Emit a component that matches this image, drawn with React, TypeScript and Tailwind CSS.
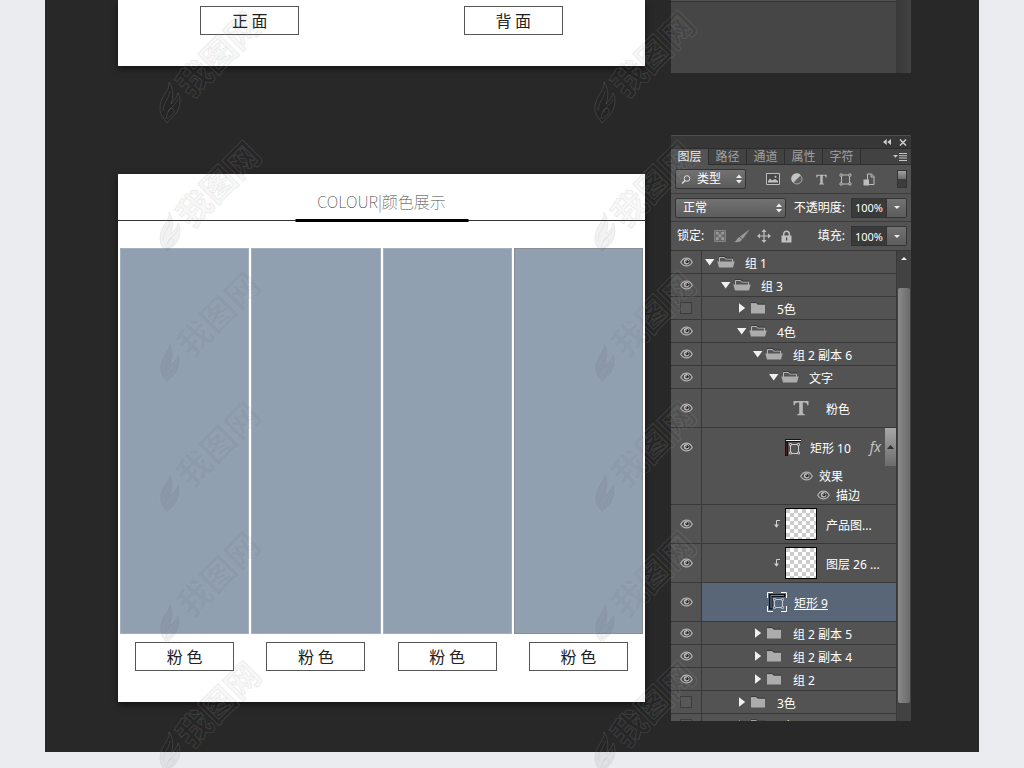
import { useState } from "react";
import type { ReactNode } from "react";

type Kind = "open" | "closed" | "text" | "shape" | "image" | "selected";

type Layer = {
  name: string;
  level: number;
  kind: Kind;
  hidden?: boolean;
};

const layers: Layer[] = [
  { name: "组 1", level: 0, kind: "open" },
  { name: "组 3", level: 1, kind: "open" },
  { name: "5色", level: 2, kind: "closed", hidden: true },
  { name: "4色", level: 2, kind: "open" },
  { name: "组 2 副本 6", level: 3, kind: "open" },
  { name: "文字", level: 4, kind: "open" },
  { name: "粉色", level: 4, kind: "text" },
  { name: "矩形 10", level: 4, kind: "shape" },
  { name: "产品图...", level: 4, kind: "image" },
  { name: "图层 26 ...", level: 4, kind: "image" },
  { name: "矩形 9", level: 4, kind: "selected" },
  { name: "组 2 副本 5", level: 3, kind: "closed" },
  { name: "组 2 副本 4", level: 3, kind: "closed" },
  { name: "组 2", level: 3, kind: "closed" },
  { name: "3色", level: 2, kind: "closed", hidden: true },
];

const tabs = ["图层", "路径", "通道", "属性", "字符"];

/* ---------- icons ---------- */

const Eye = () => (
  <svg width="13" height="10" viewBox="0 0 13 10" fill="none">
    <path d="M0.8 5.2C2.2 2.4 4.400 1.200 6.500 1.200s4.300 1.200 5.700 4C10.800 7.700 8.600 8.800 6.500 8.800S2.200 7.700 0.800 5.200z" fill="#4a4a4a" stroke="#b0b0b0" strokeWidth="1.300" />
    <circle cx="6.500" cy="4.800" r="2.700" fill="#bdbdbd" />
    <circle cx="7" cy="4.600" r="1.700" fill="#262626" />
    <circle cx="6.200" cy="3.900" r="0.700" fill="#ddd" />
  </svg>
);

const FolderOpen = () => (
  <svg width="18" height="12" viewBox="0 0 18 12">
    <path d="M2.5 6V1.5h5l1 1.5h7V6" fill="#555" stroke="#b5b5b5" />
    <path d="M2 0.5h6L9 2h7" fill="none" stroke="#333" strokeWidth="0.8" />
    <path d="M0.3 5.5h17.4L16 11.5H2z" fill="#acacac" />
  </svg>
);

const FolderClosed = () => (
  <svg width="18" height="12" viewBox="0 0 18 12">
    <path d="M2 1h5.2l1.3 1.6H16v9H2z" fill="#acacac" />
    <path d="M2 0.6h5.4l1.4 1.5H16" fill="none" stroke="#333" strokeWidth="0.8" />
  </svg>
);

const Triangle = ({ open }: { open: boolean }) => (
  <svg width="12" height="10" viewBox="0 0 12 10" fill="#f0f0f0">
    {open ? <path d="M1 2h9.4L5.7 8.4z" /> : <path d="M3 0.2L9.2 5 3 9.8z" />}
  </svg>
);

const UpDown = () => (
  <svg className="pointer-events-none absolute right-1 top-1/2 -translate-y-1/2" width="6" height="10" viewBox="0 0 6 10" fill="#eee">
    <path d="M3 0.5L6 4H0zM3 9.5L6 6H0z" />
  </svg>
);

const Frame = ({ color = "#bdbdbd" }: { color?: string }) => (
  <svg width="13" height="13" viewBox="0 0 13 13" fill="none" stroke={color}>
    <path d="M3.5 2h6M3.5 11h6M2.5 3.5v6M10.5 3.5v6" />
    <path d="M1 1h2.2v2.2H1zM9.8 1H12v2.2H9.8zM1 9.8h2.2V12H1zM9.8 9.8H12V12H9.8z" strokeWidth="0.9" />
  </svg>
);

const TypeIcon = ({ size }: { size: number }) => (
  <svg width={size} height={size} viewBox="0 0 16 16" fill="#b8b8b8">
    <path d="M0.5 1h15v4.2h-1.2C14 3.2 13.3 2.6 11.5 2.5H9.8v10.3c0 1 .5 1.3 2 1.4v1H4.2v-1c1.500 -.1 2 -.4 2 -1.400V2.500H4.500C2.700 2.600 2 3.200 1.700 5.200H0.500z" />
  </svg>
);

const ShapeThumb = () => (
  <svg width="17" height="17" viewBox="0 0 17 17" fill="none">
    <path d="M0 0h16v3H3v14H0z" fill="#191212" />
    <path d="M1 1.500h15" stroke="#eee" />
    <path d="M1.500 4v12" stroke="#4b1c1c" />
    <path d="M6.500 5.500h6M6.500 14.500h6M5.500 6.500v7M13.500 6.500v7" stroke="#ccc" />
    <path d="M4.500 4.500h2v2h-2zM12.500 4.500h2v2h-2zM4.500 13h2v2h-2zM12.500 13h2v2h-2z" stroke="#bbb" />
  </svg>
);

const SelectedThumb = () => (
  <svg width="20" height="20" viewBox="0 0 20 20" fill="none">
    <path d="M0.500 6V0.500H6M14 0.500h5.500V6M19.500 14v5.500H14M6 19.500H0.500V14" stroke="#fff" />
    <path d="M2.500 17V2.500H18v2H5V17z" fill="#111a2c" stroke="#0b0f18" />
    <path d="M4 16V3.500h13" stroke="#c8ced8" strokeWidth="0.600" />
    <path d="M8.500 7.500h6M8.500 15.500h6M7.500 8.500v6M15.500 8.500v6" stroke="#c3cad6" />
    <path d="M6.500 6.500h2v2h-2zM14.500 6.500h2v2h-2zM6.500 14.500h2v2h-2zM14.500 14.500h2v2h-2z" stroke="#aab3c2" />
  </svg>
);

const Checker = () => (
  <svg className="border border-black" width="32" height="32" viewBox="0 0 30 30">
    <defs>
      <pattern id="checker" width="8" height="8" patternUnits="userSpaceOnUse">
        <rect width="8" height="8" fill="#fff" />
        <path d="M0 0h4v4H0zM4 4h4v4H4z" fill="#ccc" />
      </pattern>
    </defs>
    <rect width="30" height="30" fill="url(#checker)" />
  </svg>
);

const ClipArrow = () => (
  <svg width="8" height="10" viewBox="0 0 8 10" fill="none" stroke="#d0d0d0">
    <path d="M7 1.500H3.500V8" />
    <path d="M1 5.500h5L3.500 8.800z" fill="#d0d0d0" stroke="none" />
  </svg>
);

const FilterIcons = () => (
  <>
    <button aria-label="像素图层" className="flex w-6 justify-center">
      <svg width="14" height="12" viewBox="0 0 14 12" fill="none">
        <path d="M0.500 0.500h13v11H0.500z" fill="#484848" stroke="#bdbdbd" />
        <path d="M2 9.500V8l2-2.500L6 7.500l3-1.500 3 2v1.500z" fill="#c2c2c2" />
        <circle cx="9.500" cy="3.800" r="1" fill="#c2c2c2" />
      </svg>
    </button>
    <button aria-label="调整图层" className="flex w-6 justify-center">
      <svg width="12" height="12" viewBox="0 0 12 12">
        <circle cx="6" cy="6" r="5" fill="#5f5f5f" stroke="#a8a8a8" />
        <path d="M9.800 2.200A5.400 5.400 0 1 0 2.200 9.800z" fill="#c4c4c4" />
      </svg>
    </button>
    <button aria-label="文字图层" className="flex w-6 justify-center">
      <TypeIcon size={11} />
    </button>
    <button aria-label="形状图层" className="flex w-6 justify-center">
      <Frame />
    </button>
    <button aria-label="智能对象" className="flex w-6 justify-center">
      <svg width="12" height="13" viewBox="0 0 12 13" fill="none">
        <path d="M4.500 7V1h4l2.500 2.500V11.500H6" stroke="#bdbdbd" />
        <path d="M8 1v3h3" stroke="#bdbdbd" />
        <path d="M0.500 6.500h5.500v6H0.500z" fill="#bdbdbd" />
      </svg>
    </button>
  </>
);

const LockIcons = () => (
  <>
    <button aria-label="锁定透明像素" className="flex w-[22px] justify-center">
      <svg width="12" height="12" viewBox="0 0 12 12">
        <path d="M0.500 0.500h11v11H0.500z" fill="#6a6a6a" stroke="#858585" />
        <path d="M2 2h2.600v2.600H2zM7.300 2H10v2.600H7.300zM4.600 4.600h2.700v2.700H4.600zM2 7.300h2.600V10H2zM7.300 7.300H10V10H7.300z" fill="#9a9a9a" />
      </svg>
    </button>
    <button aria-label="锁定图像像素" className="flex w-[22px] justify-center">
      <svg width="16" height="14" viewBox="0 0 16 14" fill="#989898">
        <path d="M15.800 0.300L8.800 10 5.800 7.500z" />
        <path d="M5.400 8l2.600 2.100C7.400 13 3 14 0.300 12.800c2.400-.5 2.300-3.800 5.100-4.800z" />
      </svg>
    </button>
    <button aria-label="锁定位置" className="flex w-[22px] justify-center">
      <svg width="14" height="14" viewBox="0 0 14 14" fill="#c0c0c0">
        <path d="M7 0l2.500 3H4.500zM7 14l2.500-3H4.500zM0 7l3-2.500v5zM14 7l-3-2.500v5z" />
        <path d="M6.400 2h1.200v10H6.400zM2 6.400h10v1.200H2z" />
      </svg>
    </button>
    <button aria-label="锁定全部" className="flex w-[22px] justify-center">
      <svg width="11" height="13" viewBox="0 0 11 13" fill="none">
        <path d="M2.700 6V4a2.800 2.800 0 0 1 5.600 0v2" stroke="#c0c0c0" strokeWidth="1.500" />
        <path d="M0.500 5.500h10V12.500H0.500z" fill="#c0c0c0" />
        <path d="M5 7.500h1.200v3H5z" fill="#444" />
      </svg>
    </button>
  </>
);

/* ---------- left column ---------- */

const Tag = ({ children }: { children: ReactNode }) => (
  <div className="mx-auto flex h-[29px] w-[99px] items-center justify-center border border-[#555] pb-0.5 text-base leading-4 text-[#222]">
    {children}
  </div>
);

const SideBoard = () => (
  <section className="grid grid-cols-2 bg-white pb-[31px] pt-1.5 shadow-[0_3px_6px_rgba(0,0,0,0.5)]">
    <Tag>正 面</Tag>
    <Tag>背 面</Tag>
  </section>
);

const ColourBoard = () => (
  <section className="bg-white pb-[31px] shadow-[0_3px_6px_rgba(0,0,0,0.5)]">
    <header className="relative flex h-[47px] items-center justify-center border-b border-[#333] pt-2">
      <h2 className="text-base font-thin text-[#444]">COLOUR|颜色展示</h2>
      <div className="absolute -bottom-0.5 left-1/2 h-[3px] w-[173px] -translate-x-1/2 bg-black" />
    </header>
    <div className="grid grid-cols-4 gap-x-0.5 px-0.5 pt-[27px]">
      {[0, 1, 2, 3].map((i) => (
        <div key={i}>
          <div className={`mb-2 h-[386px] border bg-[#91a0b1] ${i === 3 ? "border-[#8a8f95]" : "border-[#a3b0be]"}`} />
          <Tag>粉 色</Tag>
        </div>
      ))}
    </div>
  </section>
);

/* ---------- layers panel ---------- */

const VisibilityToggle = ({ hidden }: { hidden?: boolean }) => {
  const [visible, setVisible] = useState(!hidden);
  return (
    <button aria-label="可见性" aria-pressed={visible} onClick={() => setVisible(!visible)} className="flex">
      {visible ? <Eye /> : <span className="h-3 w-3 border border-[#3c3c3c] bg-[#585858]" />}
    </button>
  );
};

const Row = ({ height, hidden, active, children }: { height: string; hidden?: boolean; active?: boolean; children: ReactNode }) => (
  <li className={`flex border-b border-[#383838] ${height}`}>
    <div className="flex w-[31px] shrink-0 items-center justify-center border-r border-[#383838]">
      <VisibilityToggle hidden={hidden} />
    </div>
    <div className={`flex grow items-center whitespace-nowrap ${active ? "bg-[#596678]" : ""}`}>{children}</div>
  </li>
);

const GroupRow = ({ layer }: { layer: Layer }) => (
  <Row height="h-[23px]" hidden={layer.hidden}>
    <div className="flex items-center" style={{ paddingLeft: 2 + layer.level * 16 }}>
      <Triangle open={layer.kind === "open"} />
      <span className="ml-px mr-2.5">{layer.kind === "open" ? <FolderOpen /> : <FolderClosed />}</span>
      <span className="pt-1">{layer.name}</span>
    </div>
  </Row>
);

const LayerRow = ({ layer }: { layer: Layer }) => {
  switch (layer.kind) {
    case "text":
      return (
        <Row height="h-[39px]">
          <div className="flex items-center pl-[91px]">
            <TypeIcon size={16} />
            <span className="ml-[17px] pt-1">{layer.name}</span>
          </div>
        </Row>
      );
    case "shape":
      return (
        <li className="flex h-[77px] border-b border-[#383838]">
          <div className="flex w-[31px] shrink-0 justify-center border-r border-[#383838] pt-3.5">
            <div>
              <VisibilityToggle />
            </div>
          </div>
          <div className="grow">
            <div className="flex h-[38px] items-center pl-[83px]">
              <ShapeThumb />
              <span className="ml-2 whitespace-nowrap pt-1">{layer.name}</span>
              <i className="ml-auto mr-1 font-['Noto_Sans',sans-serif] text-sm text-[#c4c4c4]">fx</i>
              <button aria-label="折叠效果" className="flex h-full w-[11px] items-center justify-center bg-linear-to-b from-[#a8a8a8] to-[#6c6c6c]">
                <svg width="7" height="4" viewBox="0 0 7 4" fill="#333">
                  <path d="M3.500 0L7 4H0z" />
                </svg>
              </button>
            </div>
            <div className="flex h-[19px] items-center gap-1.5 pl-[98px]">
              <VisibilityToggle />
              <span className="pt-0.5">效果</span>
            </div>
            <div className="flex h-[19px] items-center gap-1.5 pl-[115px]">
              <VisibilityToggle />
              <span className="pt-0.5">描边</span>
            </div>
          </div>
        </li>
      );
    case "image":
      return (
        <Row height="h-[39px]">
          <div className="flex items-center gap-1 pl-[71px]">
            <ClipArrow />
            <Checker />
            <span className="pl-[5px] pt-1">{layer.name}</span>
          </div>
        </Row>
      );
    case "selected":
      return (
        <Row height="h-[39px]" active>
          <div className="flex items-center gap-[7px] pl-[65px]">
            <SelectedThumb />
            <span className="pt-1 underline">{layer.name}</span>
          </div>
        </Row>
      );
    default:
      return <GroupRow layer={layer} />;
  }
};

const Dropdown = ({ label, options, className }: { label: string; options: string[]; className: string }) => (
  <div className="relative">
    <select
      aria-label={label}
      className={`h-5 appearance-none rounded-xs border border-[#333] bg-linear-to-b from-[#727272] to-[#5c5c5c] leading-4 text-white ${className}`}
    >
      {options.map((o) => (
        <option key={o}>{o}</option>
      ))}
    </select>
    <UpDown />
  </div>
);

const Percent = ({ id, label }: { id: string; label: string }) => (
  <div className="ml-auto flex items-center">
    <label htmlFor={id} className="mr-1.5">
      {label}
    </label>
    <input id={id} defaultValue="100%" className="h-5 w-9 border border-[#333] bg-[#3a3a3a] text-center text-[11px] text-white" />
    <button aria-label={`${label}滑块`} className="flex h-5 w-5 items-center justify-center rounded-r-xs border border-l-0 border-[#333] bg-linear-to-b from-[#727272] to-[#5c5c5c]">
      <svg width="6" height="3" viewBox="0 0 6 3" fill="#eee">
        <path d="M0 0h6L3 3z" />
      </svg>
    </button>
  </div>
);

const LayersPanel = () => {
  const [tab, setTab] = useState("图层");
  return (
    <section className="rounded-t-xs bg-[#535353] text-xs leading-4 text-white">
      <div className="flex h-[13px] items-center justify-end gap-2 rounded-t-xs border-t border-[#505050] bg-[#373737] pr-1">
        <button aria-label="折叠">
          <svg width="8" height="6" viewBox="0 0 8 6" fill="#ccc">
            <path d="M3.700 0v6L0 3zM8 0v6L4.300 3z" />
          </svg>
        </button>
        <button aria-label="关闭">
          <svg width="8" height="7" viewBox="0 0 8 7" stroke="#ccc" strokeWidth="1.500">
            <path d="M1 0.500l6 6M7 0.500l-6 6" />
          </svg>
        </button>
      </div>
      <div className="flex h-[17px] items-stretch border-t border-[#2c2c2c] bg-[#424242]">
        {tabs.map((t) => (
          <button
            key={t}
            onClick={() => setTab(t)}
            className={`w-[38px] border-r border-[#2e2e2e] ${t === tab ? "bg-[#535353] text-[#eee]" : "border-b text-[#a0a0a0]"}`}
          >
            {t}
          </button>
        ))}
        <div className="flex grow items-center justify-end border-b border-[#2e2e2e] pr-1">
          <button aria-label="面板菜单">
            <svg width="14" height="8" viewBox="0 0 14 8" fill="#c4c4c4">
              <path d="M0 2h5L2.500 4.800zM6 0h8v1H6zM6 2.300h8v1H6zM6 4.600h8v1H6zM6 7h8v1H6z" />
            </svg>
          </button>
        </div>
      </div>
      <div className="flex h-[29px] items-center border-b border-[#3c3c3c] px-1">
        <div className="relative">
          <Dropdown label="筛选" options={["类型", "名称", "效果"]} className="w-[71px] pl-[21px]" />
          <svg className="pointer-events-none absolute left-1.5 top-1.5" width="10" height="9" viewBox="0 0 10 9" fill="none" stroke="#ddd">
            <circle cx="6" cy="3.500" r="2.800" />
            <path d="M4 5.500L1 8.500" strokeWidth="1.500" />
          </svg>
        </div>
        <div className="ml-auto flex items-center">
          <FilterIcons />
        </div>
        <button aria-label="打开筛选" className="ml-4 flex h-[18px] w-[10px] flex-col border border-[#333] bg-[#3c3c3c]">
          <span className="h-2 w-full bg-linear-to-b from-[#a0a0a0] to-[#6c6c6c]" />
        </button>
      </div>
      <div className="flex h-7 items-center border-b border-[#3c3c3c] px-1">
        <Dropdown label="混合模式" options={["正常", "溶解", "正片叠底"]} className="w-[111px] pl-[7px]" />
        <Percent id="opacity" label="不透明度:" />
      </div>
      <div className="flex h-[29px] items-center border-b border-[#383838] px-1">
        <span className="w-[34px] pl-0.5">锁定:</span>
        <LockIcons />
        <Percent id="fill" label="填充:" />
      </div>
      <div className="flex">
        <ul className="grow">
          {layers.map((layer) => (
            <LayerRow key={layer.name} layer={layer} />
          ))}
          {/* next row is cut off by the panel's lower edge */}
          <li className="h-[7px] overflow-hidden">
            <ul>
              <GroupRow layer={{ name: "2色", level: 2, kind: "closed", hidden: true }} />
            </ul>
          </li>
        </ul>
        <div className="flex w-[15px] shrink-0 flex-col items-center border-l border-[#383838] bg-[#424242] pb-[18px]">
          <button aria-label="向上滚动" className="flex h-[37px] pt-1.5">
            <svg width="6" height="3" viewBox="0 0 6 3" fill="#eee">
              <path d="M3 0l3 3H0z" />
            </svg>
          </button>
          <div className="w-3 grow rounded-xs bg-linear-to-r from-[#8a8a8a] to-[#6a6a6a]" />
        </div>
      </div>
    </section>
  );
};

/* lower end of the panel above */
const PanelFoot = () => (
  <section className="flex h-[73px]">
    <div className="grow bg-[#464646]">
      <div className="h-0.5 border-b border-[#333] bg-[#535353]" />
    </div>
    <div className="w-[15px] bg-linear-to-r from-[#383838] to-[#424242]" />
  </section>
);

/* ---------- watermark ---------- */

const Watermark = () => (
  <svg className="block overflow-visible" width="108" height="118" viewBox="0 0 108 118" fill="#000" fillOpacity="0.050" stroke="#aaa" strokeOpacity="0.180">
    <path d="M11 74C12 84 1 88 2 102c.5 6 4 8 7 13 3-5 13-9 13-22 0-4-1-6-2-8-1 5-4 8-7 11 3-8 2-16-2-22z" />
    <path d="M12 83c-1 8-7 11-7 20M20 91c-2 7-11 8-12 20M10 104c1-4 6-5 6-1s-4 5-7 8" fill="none" />
    <text
      x="60"
      y="46"
      fontSize="34"
      fontWeight="700"
      textAnchor="middle"
      dominantBaseline="central"
      transform="rotate(-45 60 46)"
    >
      我图网
    </text>
  </svg>
);

const WatermarkColumn = () => (
  <div className="flex flex-col gap-3">
    {[0, 1, 2, 3, 4, 5].map((i) => (
      <Watermark key={i} />
    ))}
  </div>
);

const App = () => {
  return (
    <main className="relative min-h-screen overflow-hidden bg-[#ebecf0] px-[45px] pb-4 font-['Noto_Sans','Noto_Sans_CJK_SC',sans-serif]">
      <div className="flex items-start gap-[26px] bg-[#282828] pb-[31px] pl-[73px] pr-[68px]">
        <div className="flex min-w-0 grow flex-col gap-[108px] font-['Noto_Sans_CJK_SC',sans-serif]">
          <SideBoard />
          <ColourBoard />
        </div>
        <aside className="flex w-60 shrink-0 flex-col gap-[62px]">
          <PanelFoot />
          <LayersPanel />
        </aside>
      </div>
      <div className="pointer-events-none absolute inset-0 flex gap-[327px] overflow-hidden pl-[158px] pt-2">
        <WatermarkColumn />
        <WatermarkColumn />
      </div>
    </main>
  );
};

export default App;
